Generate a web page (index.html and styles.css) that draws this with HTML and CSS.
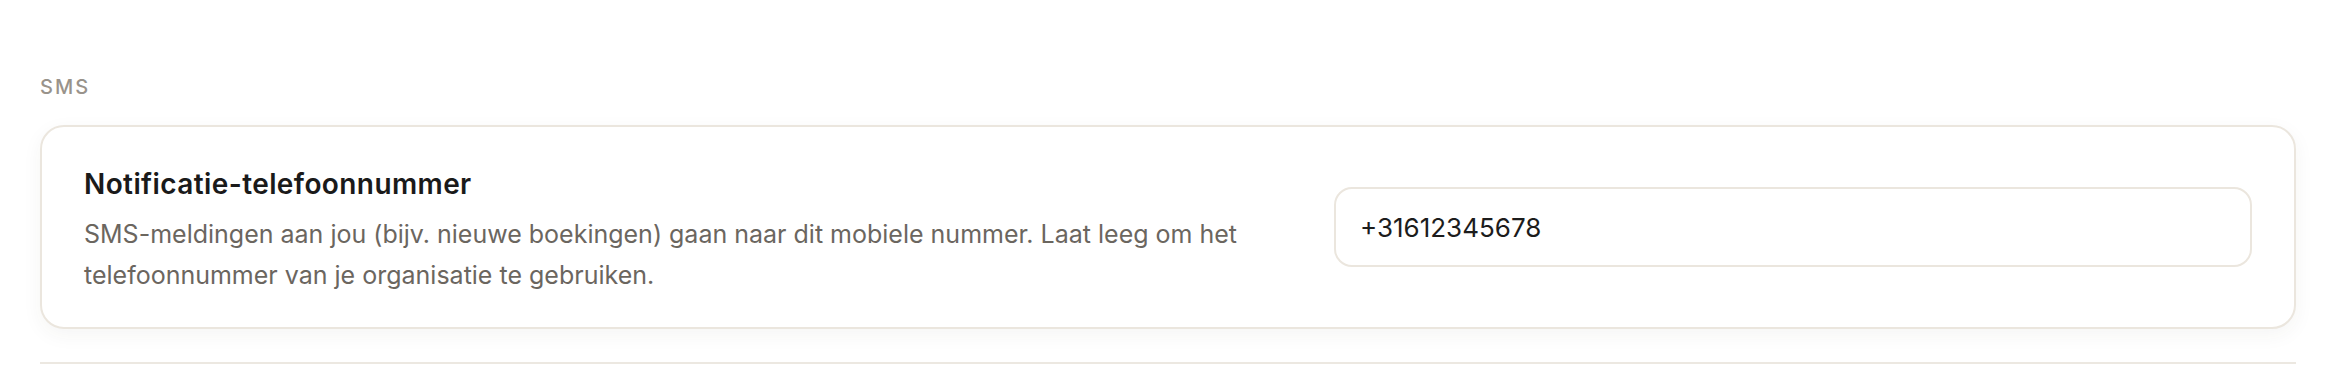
FILE: index.html
```html
<!DOCTYPE html>
<html lang="nl">
<head>
  <meta charset="UTF-8">
  <title>SMS instellingen</title>
  <link rel="stylesheet" href="styles.css">
</head>
<body>
<div class="settings">
  <h4 class="section-label">SMS</h4>
  <div class="card">
    <div class="card-text">
      <h3 class="card-title">Notificatie-telefoonnummer</h3>
      <p class="card-desc">SMS-meldingen aan jou (bijv. nieuwe boekingen) gaan naar dit mobiele nummer. Laat leeg om het telefoonnummer van je organisatie te gebruiken.</p>
    </div>
    <input class="field" type="tel" value="+31612345678">
  </div>
  <div class="divider"></div>
</div>
</body>
</html>
```

FILE: styles.css
```css
*{margin: 0;padding: 0;box-sizing: border-box;}
body{
  background: #fff;
  font-family: Inter, "Noto Sans", sans-serif;
}
.settings{
  padding: 72px 40px 0 40px;
}

/* sectie label */
.section-label{
  font-size: 20px;
  line-height: 30px;
  font-weight: 500;
  letter-spacing: 2px;
  color: #99938b;
  margin-bottom: 23px;
}

/* kaart */
.card{
  display: flex;
  align-items: center;
  gap: 40px;
  height: 204px;
  padding: 0 42px;
  background: #fff;
  border: 2px solid #ebe6de;
  border-radius: 24px;
  box-shadow: 0 6px 20px rgba(60, 50, 30, 0.05);
}
.card-text{
  flex: 1;
  margin-top: 6px;
}
.card-title{
  font-size: 28px;
  line-height: 38px;
  font-weight: 600;
  color: #1a1a1a;
  letter-spacing: 0.4px;
}
.card-desc{
  margin-top: 11px;
  font-size: 25px;
  line-height: 40.5px;
  color: #6b665f;
}

/* invoerveld */
.field{
  width: 918px;
  height: 80px;
  padding: 0 24px;
  border: 2px solid #ebe6de;
  border-radius: 18px;
  font-family: inherit;
  font-size: 26px;
  color: #1c1c1c;
  background: #fff;
  outline: none;
}

.divider{
  margin-top: 33px;
  border-top: 2px solid #ece8e1;
}
```
